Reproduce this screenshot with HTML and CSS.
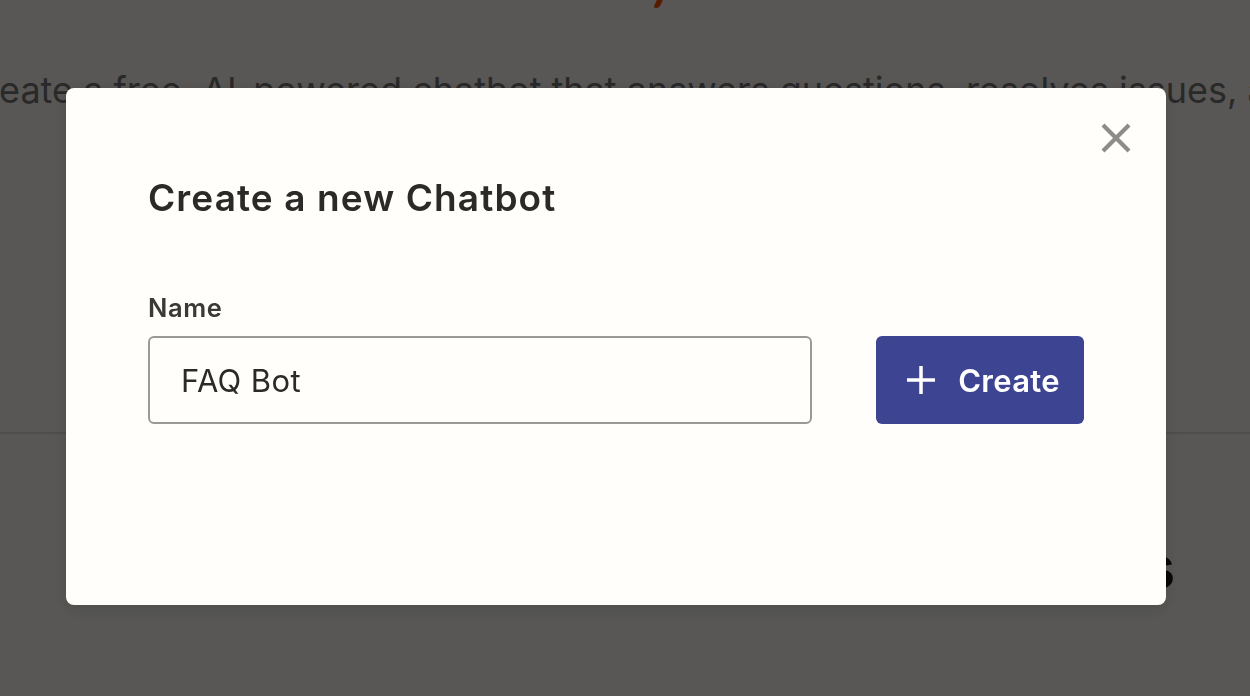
FILE: index.html
```html
<!DOCTYPE html>
<html>
<head>
<meta charset="utf-8">
<link rel="stylesheet" href="styles.css">
</head>
<body>
<div class="page">
  <div class="hero">
    <div class="logo-mark"></div>
    <p class="lead">Create a free, AI-powered chatbot that answers questions, resolves issues, and more</p>
  </div>
  <div class="section">
    <h2 class="section-title">Chatbot templates</h2>
  </div>
</div>
<div class="overlay"></div>
<div class="modal" role="dialog">
  <button class="close" aria-label="Close">
    <svg width="32" height="32" viewBox="0 0 32 32"><path d="M3 3 L29 29 M29 3 L3 29" stroke="#8c8c8b" stroke-width="4.2" fill="none"/></svg>
  </button>
  <h1 class="title">Create a new Chatbot</h1>
  <label class="label" for="name">Name</label>
  <div class="row">
    <input id="name" class="input" type="text" value="FAQ Bot">
    <button class="create">
      <svg width="30" height="30" viewBox="0 0 30 30"><path d="M15 1 V29 M1 15 H29" stroke="#fff" stroke-width="3.5" fill="none"/></svg>
      <span>Create</span>
    </button>
  </div>
</div>
</body>
</html>
```
FILE: styles.css
```css
html, body {
  margin: 0;
  padding: 0;
  height: 100%;
}
body {
  background: #fffdf9;
  font-family: Inter, "Noto Sans", sans-serif;
  overflow: hidden;
}
.page {
  height: 696px;
}
.hero {
  height: 432px;
  border-bottom: 2px solid #e4e2dd;
  display: flex;
  flex-direction: column;
  align-items: center;
  overflow: hidden;
}
.logo-mark {
  width: 6px;
  height: 8px;
  margin-left: 66px;
  background: #ff4f00;
  border-radius: 0 0 4px 4px;
  transform: skewX(-25deg);
}
.lead {
  margin: 60px 0 0 118px;
  white-space: nowrap;
  font-size: 36px;
  font-weight: 400;
  color: #767676;
}
.section {
  display: flex;
  justify-content: flex-end;
  padding-right: 75px;
}
.section-title {
  margin: 98px 0 0 0;
  font-size: 58px;
  font-weight: 700;
  color: #201515;
}
.overlay {
  position: fixed;
  inset: 0;
  background: rgba(0, 0, 0, 0.655);
}
.modal {
  position: fixed;
  left: 66px;
  top: 88px;
  width: 1100px;
  height: 517px;
  box-sizing: border-box;
  background: #fffefb;
  border-radius: 8px;
  padding: 76px 82px 0 82px;
  box-shadow: 0 4px 16px rgba(0,0,0,0.15);
}
.close {
  position: absolute;
  top: 34px;
  right: 34px;
  width: 32px;
  height: 32px;
  padding: 0;
  border: 0;
  background: transparent;
}
.title {
  margin: -4px 0 0;
  font-size: 37px;
  font-weight: 600;
  color: #2b2a28;
  letter-spacing: 1.1px;
  line-height: 76px;
  height: 76px;
}
.label {
  display: block;
  margin-top: 58px;
  font-size: 25.5px;
  font-weight: 600;
  color: #3a3936;
  line-height: 28px;
  letter-spacing: 0.6px;
}
.row {
  display: flex;
  align-items: center;
  margin-top: 14px;
  gap: 64px;
}
.input {
  width: 664px;
  height: 88px;
  box-sizing: border-box;
  border: 2px solid #9a9995;
  border-radius: 6px;
  background: #fffefb;
  padding: 0 0 0 31px;
  font-family: Inter, sans-serif;
  font-size: 31px;
  letter-spacing: 0.4px;
  color: #2b2a28;
  outline: none;
}
.create {
  width: 208px;
  height: 88px;
  border: 0;
  border-radius: 6px;
  background: #3d4592;
  color: #fff;
  display: flex;
  align-items: center;
  justify-content: center;
  gap: 22px;
  font-family: Inter, sans-serif;
  font-size: 31px;
  font-weight: 600;
  letter-spacing: 0.3px;
  padding: 0 0 0 6px;
}
```
